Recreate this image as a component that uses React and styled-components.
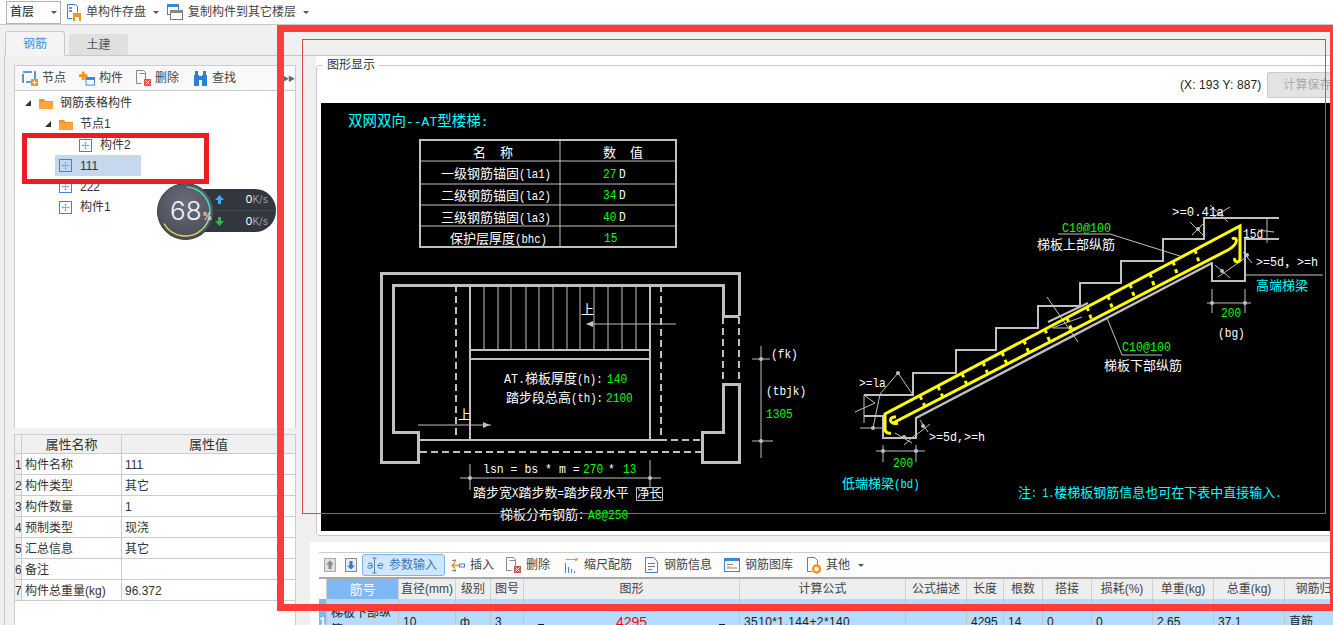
import React from 'react';
import styled, { createGlobalStyle } from 'styled-components';

const UI_FONT = '"Liberation Sans", "Noto Sans CJK SC", sans-serif';
const CAD_FONT = '"Liberation Mono", "Noto Sans CJK SC", monospace';

const GlobalStyle = createGlobalStyle`
  html, body { margin: 0; padding: 0; background: #fff; }
  * { box-sizing: border-box; }
`;

const Page = styled.div`
  position: relative;
  width: 1333px;
  height: 625px;
  overflow: hidden;
  display: flex;
  flex-direction: column;
  background: #f0f0f0;
  font: 12px/1 ${UI_FONT};
  color: #333;
`;

/* ---------- top bar ---------- */
const TopBar = styled.div`
  height: 25px;
  flex: none;
  display: flex;
  align-items: center;
  padding-left: 6px;
  background: #fff;
  border-bottom: 1px solid #c8c8c8;
`;
const FloorSelect = styled.div`
  width: 55px;
  height: 23px;
  display: flex;
  align-items: center;
  justify-content: space-between;
  padding: 0 3px 0 3px;
  margin-right: 6px;
  border: 1px solid #b4b4b4;
  color: #222;
`;
const TopBtn = styled.div`
  display: flex;
  align-items: center;
  margin-right: ${({ $gap }) => $gap}px;
  color: #444;
  white-space: nowrap;
  svg { margin-right: ${({ $iconGap }) => $iconGap}px; flex: none; }
`;
const Caret = styled.span`
  display: inline-block;
  margin-left: ${({ $left }) => $left || 0}px;
  border-left: 3px solid transparent;
  border-right: 3px solid transparent;
  border-top: 3px solid #555;
`;

const Main = styled.div`
  flex: 1;
  display: flex;
  min-height: 0;
`;

/* ---------- left column ---------- */
const LeftCol = styled.div`
  width: 302px;
  flex: none;
  display: flex;
  flex-direction: column;
  padding-left: 4px;
`;
const Tabs = styled.div`
  height: 31px;
  flex: none;
  display: flex;
  align-items: flex-end;
  padding-left: 1px;
  border-bottom: 1px solid #c8c8c8;
`;
const Tab = styled.div`
  width: ${({ $active }) => ($active ? 60 : 59)}px;
  height: ${({ $active }) => ($active ? 25 : 22)}px;
  margin-right: 4px;
  margin-bottom: -1px;
  display: flex;
  align-items: center;
  justify-content: center;
  border-radius: 3px 3px 0 0;
  font-size: 12px;
  color: ${({ $active }) => ($active ? '#3b8fe0' : '#555')};
  background: ${({ $active }) => ($active ? '#f4f4f4' : '#e0e0e0')};
  border: 1px solid ${({ $active }) => ($active ? '#c8c8c8' : '#e0e0e0')};
  border-bottom: ${({ $active }) => ($active ? '1px solid #f4f4f4' : '1px solid #c8c8c8')};
`;
const LeftBody = styled.div`
  flex: 1;
  min-height: 0;
  border-left: 1px solid #c8c8c8;
  padding: 9px 0 0 9px;
  display: flex;
  flex-direction: column;
`;
const PanelBox = styled.div`
  width: 282px;
  flex: none;
  display: flex;
  flex-direction: column;
  border: 1px solid #c8ccd4;
  border-bottom: 0;
  background: #fff;
`;
const TreeTools = styled.div`
  height: 25px;
  display: flex;
  align-items: center;
  padding-left: 7px;
  border-bottom: 1px solid #c8ccd4;
  background: #f9f9f9;
  position: relative;
`;
const ToolItem = styled.div`
  display: flex;
  align-items: center;
  margin-right: ${({ $gap }) => $gap}px;
  color: #444;
  svg { margin-right: 4px; flex: none; }
`;
const Collapse = styled.span`
  margin-left: auto;
  margin-right: 1px;
  font-size: 7px;
  letter-spacing: -1px;
  color: #666;
`;
const Tree = styled.div`
  height: 337px;
  padding-top: 2px;
  background: #fff;
`;
const TreeRow = styled.div`
  height: 20.8px;
  display: flex;
  align-items: center;
  padding-left: ${({ $indent }) => $indent}px;
  color: #333;
`;
const RowInner = styled.div`
  display: flex;
  align-items: center;
  height: 21px;
  width: ${({ $selected }) => ($selected ? '86px' : 'auto')};
  padding-left: 4px;
  background: ${({ $selected }) => ($selected ? '#c7d7ee' : 'transparent')};
  svg { margin-right: ${({ $folder }) => ($folder ? 7 : 8)}px; flex: none; }
`;
const Twist = styled.span`
  width: 0;
  height: 0;
  margin-right: 4px;
  border-style: solid;
  border-width: 0 0 6px 6px;
  border-color: transparent transparent #333 transparent;
`;
const PropGrid = styled.div`
  margin-top: 6px;
  width: 282px;
  flex: 1;
  background: #fff;
  border-left: 1px solid #c8ccd4;
  border-right: 1px solid #c8ccd4;
`;
const PropRow = styled.div`
  display: grid;
  grid-template-columns: 7px 100px 1fr;
  height: ${({ $head }) => ($head ? 20 : 21)}px;
  border-top: ${({ $head }) => ($head ? '1px solid #c8ccd4' : 0)};
  border-bottom: 1px solid #c8ccd4;
`;
const PropCell = styled.div`
  display: flex;
  align-items: center;
  justify-content: ${({ $head }) => ($head ? 'center' : 'flex-start')};
  padding-left: ${({ $head, $num }) => ($head || $num ? 0 : 3)}px;
  padding-top: ${({ $head }) => ($head ? 0 : 2)}px;
  border-right: ${({ $last }) => ($last ? 0 : '1px solid #c8ccd4')};
  background: ${({ $head, $num }) => ($head || $num ? '#f0f0f0' : '#fff')};
  font-size: ${({ $head }) => ($head ? 13 : 12)}px;
  color: #333;
  overflow: hidden;
`;

/* ---------- right column ---------- */
const RightCol = styled.div`
  width: 1031px;
  flex: none;
  display: flex;
  flex-direction: column;
  overflow: hidden;
`;
const RightTop = styled.div`
  height: 31px;
  flex: none;
  border-bottom: 1px solid #c8c8c8;
`;
const GroupWrap = styled.div`
  margin-left: 14px;
  padding-top: 9px;
  background: #fff;
  flex: none;
  width: 1040px;
`;
const GroupBox = styled.div`
  position: relative;
  width: 1040px;
  height: 471px;
  padding: 0 4px;
  background: #fff;
  border: 1px solid #c8c8c8;
  border-radius: 3px;
`;
const GroupLabel = styled.span`
  position: absolute;
  left: 6px;
  top: -7px;
  padding: 0 4px;
  background: #fff;
  color: #333;
`;
const InfoRow = styled.div`
  height: 37px;
  display: flex;
  align-items: center;
  padding-left: 859px;
  color: #222;
  letter-spacing: 0.1px;
`;
const SaveBtn = styled.div`
  width: 70px;
  height: 26px;
  margin-left: 6px;
  display: flex;
  align-items: center;
  padding-left: 15px;
  background: #e3e3e3;
  border: 1px solid #c5cad3;
  border-radius: 2px;
  color: #aaa;
`;
const Canvas = styled.svg`
  display: block;
  width: 1030px;
  height: 428px;
  background: #000;
`;

const LowerPanel = styled.div`
  margin: 6px 0 0 8px;
  flex: 1;
  min-height: 0;
  padding: 10px 0 0 9px;
  background: #fff;
  width: 1050px;
`;
const LowerTools = styled.div`
  height: 25px;
  display: flex;
  align-items: center;
  padding-left: 5px;
  border-top: 1px solid #ccc;
  background: #fdfdfd;
`;
const SmallSquare = styled.div`
  width: 12px;
  height: 14px;
  margin-right: 9px;
  display: flex;
  svg { display: block; }
`;
const GridTool = styled.div`
  display: flex;
  align-items: center;
  height: 22px;
  padding: ${({ $active }) => ($active ? '0 7px 0 4px' : '0')};
  margin-left: ${({ $left }) => $left}px;
  color: ${({ $active }) => ($active ? '#3a78b8' : '#444')};
  background: ${({ $active }) => ($active ? '#cfe6fb' : 'transparent')};
  border: ${({ $active }) => ($active ? '1px solid #7eb4ea' : 0)};
  border-radius: 3px;
  white-space: nowrap;
  svg { margin-right: ${({ $iconGap }) => $iconGap || 5}px; flex: none; }
`;
const COLS = '8px 72px 57px 35px 33px 216px 166px 61px 37px 39px 49px 61px 61px 71px 70px';
const GridHead = styled.div`
  display: grid;
  grid-template-columns: ${COLS};
  height: 22px;
  border-top: 2px solid #a8a8a8;
`;
const HeadCell = styled.div`
  display: flex;
  align-items: center;
  justify-content: center;
  white-space: nowrap;
  overflow: hidden;
  font-size: ${({ $big }) => ($big ? 13 : 12)}px;
  color: ${({ $sel }) => ($sel ? '#fff' : '#444')};
  background: ${({ $sel, $corner }) => ($sel ? '#7eb8f5' : $corner ? '#fff' : '#eee')};
  border-right: 1px solid #d0d0d0;
`;
const GridData = styled.div`
  display: grid;
  grid-template-columns: ${COLS};
  height: 46px;
`;
const DataCell = styled.div`
  position: relative;
  display: flex;
  align-items: center;
  justify-content: ${({ $center }) => ($center ? 'center' : 'flex-start')};
  padding-left: ${({ $center, $num }) => ($center || $num ? 0 : 4)}px;
  background: ${({ $num }) => ($num ? '#7eb8f5' : '#b5dbff')};
  border-right: 1px solid #c4c4c4;
  color: ${({ $red, $num }) => ($red ? '#f00' : $num ? '#fff' : '#222')};
  font-size: ${({ $red }) => ($red ? 14 : 12)}px;
  font-weight: ${({ $num }) => ($num ? 700 : 400)};
  line-height: 17px;
  letter-spacing: ${({ $mono }) => ($mono ? '0.4px' : 0)};
  white-space: ${({ $wrap }) => ($wrap ? 'normal' : 'nowrap')};
  overflow: hidden;
`;
const ShapeTick = styled.span`
  position: absolute;
  top: 25px;
  ${({ $side }) => $side}: 14px;
  width: 6px;
  height: 1px;
  background: #222;
`;

/* ---------- overlays ---------- */
const Frame = styled.div`
  position: absolute;
  left: ${({ $x }) => $x}px;
  top: ${({ $y }) => $y}px;
  width: ${({ $w }) => $w}px;
  height: ${({ $h }) => $h}px;
  border: ${({ $t }) => $t}px solid ${({ $c }) => $c};
  pointer-events: none;
`;
const Widget = styled.div`
  position: absolute;
  left: 157px;
  top: 183px;
  width: 119px;
  height: 57px;
`;
const Pill = styled.div`
  position: absolute;
  left: 30px;
  top: 6px;
  width: 89px;
  height: 43px;
  padding-left: 28px;
  border-radius: 0 21px 21px 0;
  background: #32363f;
  display: flex;
  flex-direction: column;
`;
const SpeedRow = styled.div`
  flex: 1;
  display: flex;
  align-items: center;
  justify-content: space-between;
  padding-right: 8px;
  font: 10px/1 "Inter", "Liberation Sans", sans-serif;
  color: #9a9ea8;
  border-top: ${({ $split }) => ($split ? '1px solid #454953' : 0)};
  b { font-weight: 400; color: #fff; font-size: 11px; }
`;
const Dial = styled.svg`
  position: absolute;
  left: 0;
  top: 0;
`;
const DialText = styled.div`
  position: absolute;
  left: 13px;
  top: 15px;
  color: #f4f4f6;
  font: 300 26px/1 "Inter", "Open Sans", sans-serif;
  span { font-size: 10px; font-weight: 400; margin-left: 1px; }
`;

/* ---------- CAD drawing parts ---------- */
const Wall = styled.path`
  fill: none;
  stroke: #c0c0c0;
  stroke-width: ${({ $w }) => $w || 3}px;
  stroke-dasharray: ${({ $dash }) => $dash || 'none'};
  shape-rendering: crispEdges;
`;
const Thin = styled.path`
  fill: none;
  stroke: #c0c0c0;
  stroke-width: 1px;
`;
const Rebar = styled.path`
  fill: none;
  stroke: #ffff00;
  stroke-width: 3px;
  stroke-dasharray: ${({ $dash }) => $dash || 'none'};
`;
const Dot = styled.circle`
  fill: #c0c0c0;
`;
const Label = styled.text`
  font-family: ${CAD_FONT};
  font-size: ${({ $s }) => $s || 13}px;
  fill: ${({ $c }) => $c || '#fff'};
  white-space: pre;
`;
const LatinSpan = styled.tspan`
  font-size: 13px;
`;

// the CAD font has narrow, tall latin letters: squeeze them to a fixed advance
const Latin = ({ w = 6.4, children }) => (
  <LatinSpan textLength={children.length * w} lengthAdjust="spacingAndGlyphs">
    {children}
  </LatinSpan>
);
const Mono = ({ x, y, c, w = 6.7, children }) => (
  <Label
    x={x}
    y={y}
    $c={c}
    textLength={children.length * w}
    lengthAdjust="spacingAndGlyphs"
  >
    {children}
  </Label>
);

const GREEN = '#00ff00';
const CYAN = '#00ffff';

/* ---------- small icons ---------- */
const FolderIcon = () => (
  <svg width="14" height="13" viewBox="0 0 14 13">
    <path d="M0 2h5l1.5 2H14v8H0z" fill="#f7941d" />
    <path d="M0 5h14v7H0z" fill="#fba63c" />
  </svg>
);
const ElementIcon = () => (
  <svg width="13" height="13" viewBox="0 0 13 13" fill="none" stroke="#3d86d6">
    <rect x=".5" y=".5" width="12" height="12" />
    <path d="M6.500 3v7M3 6.500h7M5.500 4l1-1 1 1M5.500 9l1 1 1-1M4 5.500l-1 1 1 1M9 5.500l1 1-1 1" stroke="#7fb2e8" />
  </svg>
);
const SaveIcon = () => (
  <svg width="14" height="17" viewBox="0 0 14 17" fill="none">
    <path d="M.5.5h8l2 2v6M.5.5v14h5" stroke="#3d86d6" />
    <rect x="2" y="3" width="3" height="2" fill="#5a9ad9" />
    <rect x="2" y="6" width="3" height="2" fill="#5a9ad9" />
    <rect x="6" y="9" width="8" height="8" fill="#f7941d" />
    <rect x="8" y="13" width="4" height="4" fill="#fff" />
  </svg>
);
const CopyIcon = () => (
  <svg width="16" height="16" viewBox="0 0 16 16" fill="none">
    <rect x=".5" y=".5" width="11" height="10" fill="#fff" stroke="#3d86d6" />
    <rect x="0" y="0" width="12" height="3" fill="#3d86d6" />
    <rect x="3.500" y="6.500" width="12" height="9" fill="#fff" stroke="#777" />
    <rect x="3" y="6" width="13" height="3" fill="#888" />
  </svg>
);
const NodeIcon = () => (
  <svg width="16" height="15" viewBox="0 0 16 15" fill="none">
    <rect x="1" y="1" width="12" height="10" stroke="#2f7fd0" strokeWidth="1.600" strokeDasharray="9 2" />
    <rect x="9" y="8" width="7" height="7" fill="#f7941d" />
    <path d="M12.500 9.500v4M10.500 11.500h4" stroke="#fff" />
  </svg>
);
const PartIcon = () => (
  <svg width="16" height="15" viewBox="0 0 17 15" fill="none">
    <path d="M3 0h3v3h3v3H6v3H3V6H0V3h3z" fill="#f7941d" />
    <rect x="7.500" y="6.500" width="9" height="8" fill="#fff" stroke="#3d86d6" />
    <rect x="7" y="6" width="10" height="3" fill="#3d86d6" />
  </svg>
);
const DeleteIcon = () => (
  <svg width="15" height="16" viewBox="0 0 15 16" fill="none">
    <path d="M.5.5h7l2 2v9M.5.5v13h5M3.500 3.500h6" stroke="#888" />
    <rect x="8" y="9" width="7" height="7" fill="#d9534f" />
    <path d="M9.500 10.500l4 4M13.500 10.500l-4 4" stroke="#fff" />
  </svg>
);
const FindIcon = () => (
  <svg width="15" height="15" viewBox="0 0 15 15">
    <rect x="1" y="4" width="5" height="11" fill="#2f7fd0" />
    <rect x="9" y="4" width="5" height="11" fill="#2f7fd0" />
    <rect x="2" y="0" width="3" height="4" fill="#2f7fd0" />
    <rect x="10" y="0" width="3" height="4" fill="#2f7fd0" />
    <rect x="6" y="5" width="3" height="4" fill="#2f7fd0" />
  </svg>
);
const UpIcon = () => (
  <svg width="12" height="14" viewBox="0 0 12 14">
    <rect x=".5" y=".5" width="11" height="13" fill="#e0e0e0" stroke="#aaa" />
    <path d="M6 2.500l4 4H7.500V11h-3V6.500H2z" fill="#8a8a8a" />
  </svg>
);
const DownIcon = () => (
  <svg width="12" height="14" viewBox="0 0 12 14">
    <rect x=".5" y=".5" width="11" height="13" fill="#e8eef5" stroke="#888" />
    <path d="M6 11.500l4-4H7.500V3h-3v4.500H2z" fill="#2f7fd0" />
  </svg>
);
const AjeIcon = () => (
  <svg width="20" height="17" viewBox="0 0 20 17" fill="none" stroke="#5a7fa8">
    <path d="M7.500 1v15M5.500 1h4M5.500 16h4" />
    <path d="M1 7c1-1.500 4-1.500 4 .5V11M5 8.500C2 8 .5 9 1 10.500s3.500 1 4-.5M11 8.500h5c0-3-5-3-5 0s3 3.500 5 2" stroke="#3a78b8" />
  </svg>
);
const InsertIcon = () => (
  <svg width="14" height="15" viewBox="0 0 14 15" fill="none">
    <path d="M1 2.500h4M1 12.500h4M4 1v3M4 11v3" stroke="#888" />
    <path d="M8 7.500H1M4 4.500l-3 3 3 3" stroke="#f7941d" strokeWidth="1.500" />
    <rect x="8.500" y="6" width="5" height="3" fill="none" stroke="#3d86d6" />
  </svg>
);
const ScaleIcon = () => (
  <svg width="14" height="15" viewBox="0 0 14 15" fill="none">
    <path d="M.5 5v10M3.500 9v6M6.500 11v4M9.500 13v2" stroke="#3d86d6" />
    <path d="M1 1.500h11M10 0l3 1.500-3 1.500" stroke="#f7941d" />
  </svg>
);
const InfoIcon = () => (
  <svg width="13" height="16" viewBox="0 0 13 16" fill="none" stroke="#3d86d6">
    <path d="M.5.5h8l4 4v11H.5z" />
    <path d="M3 6.500h7M3 9.500h7M3 12.500h4" stroke="#777" />
  </svg>
);
const LibIcon = () => (
  <svg width="16" height="14" viewBox="0 0 16 14" fill="none">
    <rect x=".5" y=".5" width="15" height="13" stroke="#3d86d6" />
    <rect x="0" y="0" width="16" height="3" fill="#3d86d6" />
    <path d="M3 6.500h6M3 10h10" stroke="#888" />
    <path d="M3 9h3" stroke="#f7941d" />
  </svg>
);
const OtherIcon = () => (
  <svg width="14" height="17" viewBox="0 0 14 17" fill="none">
    <path d="M.5.5h7l3 3v5M.5.5v14h4" stroke="#3d86d6" />
    <circle cx="9.500" cy="12" r="3.500" fill="#fff" stroke="#f7941d" strokeWidth="2.500" />
  </svg>
);

/* ---------- the stair drawing, in page pixels ---------- */
const treadXs = [484, 498, 511, 526, 539, 553, 567, 580, 594, 608, 622, 636];
const tieXs = [920, 938, 962, 983, 1002, 1024, 1045, 1067, 1087, 1108, 1130, 1150, 1173, 1195];
const upperY = (x) => 414 - (x - 886) * 0.531;
const lowerY = (x) => 423 - (x - 893) * 0.514;
const dots = [
  [761, 359], [761, 441], [470, 478], [650, 478], [898, 373], [873, 428], [883, 451], [916, 451],
  [1212, 303], [1245, 303], [1198, 229], [1222, 271], [1247, 255], [923, 426], [904, 437],
];

const StairDrawing = () => (
  <Canvas viewBox="321 103 1030 428">
    <Label x="348" y="126" $s="14.500" $c={CYAN}>双网双向<Latin w={7.8}>--AT</Latin>型楼梯<Latin w={7.8}>:</Latin></Label>

    {/* anchor table */}
    <Wall $w="2" d="M420 140H676V247H420Z" />
    <Thin d="M560 140V247M420 161H676M420 184H676M420 205H676M420 226H676" />
    <Label x="473" y="157">名</Label>
    <Label x="500" y="157">称</Label>
    <Label x="603" y="157">数</Label>
    <Label x="630" y="157">值</Label>
    <Label x="441" y="178">一级钢筋锚固<Latin>(la1)</Latin></Label>
    <Label x="441" y="200">二级钢筋锚固<Latin>(la2)</Latin></Label>
    <Label x="441" y="222">三级钢筋锚固<Latin>(la3)</Latin></Label>
    <Label x="450" y="243">保护层厚度<Latin>(bhc)</Latin></Label>
    <Mono x="603" y="178" c={GREEN}>27</Mono>
    <Mono x="619" y="178">D</Mono>
    <Mono x="603" y="199" c={GREEN}>34</Mono>
    <Mono x="619" y="199">D</Mono>
    <Mono x="603" y="221" c={GREEN}>40</Mono>
    <Mono x="619" y="221">D</Mono>
    <Mono x="604" y="242" c={GREEN}>15</Mono>

    {/* plan view */}
    <Wall d="M739 316V273H381V462H418V432H393V285H723V316H739M739 384V462H702V432H723V384Z" />
    <Wall $w="2" $dash="7 4" d="M723 317V384M739 317V384" />
    <Wall $w="2" $dash="7 4" d="M456 285V440M661 285V440M660 440H702M420 452H702" />
    <Wall $w="2" d="M470 285V440M650 285V440M470 350H650M470 359H650M418 440H660" />
    <Thin d={treadXs.map((x) => `M${x} 285V350`).join('')} />
    <Thin d="M587 324H676M418 425H491M761 346V458M752 359H770M752 441H773M460 478H661M470 464V490M650 460V487" />
    <path d="M586 324l7-3v6zM490 425l-7-3v6z" fill="#c0c0c0" />
    <Label x="581" y="314">上</Label>
    <Label x="458" y="419">上</Label>
    <Label x="504" y="383"><Latin w={7}>AT.</Latin>梯板厚度<Latin>(h):</Latin></Label>
    <Mono x="607" y="383" c={GREEN}>140</Mono>
    <Label x="506" y="402">踏步段总高<Latin>(th):</Latin></Label>
    <Mono x="606" y="402" c={GREEN}>2100</Mono>
    <Mono x="771" y="358">(fk)</Mono>
    <Mono x="766" y="395">(tbjk)</Mono>
    <Mono x="766" y="418" c={GREEN}>1305</Mono>
    <Mono x="483" y="473" w={6.9}>lsn = bs * m =</Mono>
    <Mono x="583" y="473" c={GREEN}>270</Mono>
    <Mono x="608" y="473">*</Mono>
    <Mono x="623" y="473" c={GREEN}>13</Mono>
    <Label x="473" y="497">踏步宽<Latin>X</Latin>踏步数<Latin>=</Latin>踏步段水平</Label>
    <Label x="637" y="498" $s="12.500">净长</Label>
    <Thin d="M636.500 487.500H662.500V500.500H636.500Z" />
    <Label x="500" y="519">梯板分布钢筋<Latin>:</Latin></Label>
    <Mono x="588" y="519" c={GREEN}>A8@250</Mono>

    {/* section view */}
    <Wall $w="2" d="M864 395H913V373H956V350H996V328H1038V306H1080V283H1121V261H1163V239H1204V218H1279M864 416H883V438H916V417M1212 262V281H1245V239H1279" />
    <path d="M916 418L1212 263" fill="none" stroke="#c0c0c0" strokeWidth="2.500" />
    <Thin d="M1245 275H1323M864 395V423M855 412L875 403L864 395M1058 234H1110L1183 257M1107 318L1122 355H1162" />
    <Thin d="M873 428L880 394L898 373L913 395M860 428H883M876 451H925M883 445V462M916 445V462M1207 303H1251M1212 289V313M1245 289V313" />
    <Thin d="M1267 217V243M1258 230L1274 232M1210 205L1228 222M1212 218L1230 207M1192 235L1204 223M1190 222L1203 235M1243 252L1252 263M1215 265L1230 278M1218 277L1245 258M1047 297L1078 342M1052 328L1082 317M1053 328H1077" />
    <Thin d="M895 433L912 443M904 445L915 435M920 420L928 432M915 436L930 424" />
    <path d="M1048 322L1088 303" fill="none" stroke="#c0c0c0" strokeWidth="2" />
    {dots.map(([x, y]) => <Dot key={`${x}-${y}`} cx={x} cy={y} r="2" />)}

    <Rebar d="M891 433C886 434 885 431 885 428V414L1240 226V259C1240 263 1233 263 1235 258" />
    <Rebar d="M898 423C889 426 888 416 896 417M893 423L1228 250C1240 243 1237 236 1232 239" />
    <Rebar
      $dash="4 4 4"
      d={tieXs.map((x) => `M${x} ${upperY(x).toFixed(1)}L${x + 5} ${lowerY(x + 5).toFixed(1)}`).join('')}
    />

    <Mono x="1062" y="232" c={GREEN} w={7}>C10@100</Mono>
    <Label x="1037" y="249">梯板上部纵筋</Label>
    <Mono x="1122" y="351" c={GREEN} w={7}>C10@100</Mono>
    <Label x="1104" y="370">梯板下部纵筋</Label>
    <Mono x="1172" y="216" w={7.4}>{'>=0.41a'}</Mono>
    <Mono x="1243" y="238">15d</Mono>
    <Label x="1256" y="266"><Latin w={7}>{'>=5d'}</Latin>，<Latin w={7}>{'>=h'}</Latin></Label>
    <Label x="1256" y="290" $c={CYAN}>高端梯梁</Label>
    <Mono x="1221" y="317" c={GREEN}>200</Mono>
    <Mono x="1218" y="337">(bg)</Mono>
    <Mono x="859" y="387">{'>=la'}</Mono>
    <Mono x="929" y="441" w={7}>{'>=5d,>=h'}</Mono>
    <Mono x="893" y="467" c={GREEN}>200</Mono>
    <Label x="842" y="488" $c={CYAN}>低端梯梁<Latin>(bd)</Latin></Label>
    <Label x="1018" y="497" $c={CYAN}>注<Latin w={5.8}>: 1.</Latin>楼梯板钢筋信息也可在下表中直接输入<Latin>.</Latin></Label>
  </Canvas>
);

const props = [
  ['1', '构件名称', '111'],
  ['2', '构件类型', '其它'],
  ['3', '构件数量', '1'],
  ['4', '预制类型', '现浇'],
  ['5', '汇总信息', '其它'],
  ['6', '备注', ''],
  ['7', '构件总重量(kg)', '96.372'],
];

const heads = ['直径(mm)', '级别', '图号', '图形', '计算公式', '公式描述', '长度', '根数', '搭接', '损耗(%)', '单重(kg)', '总重(kg)', '钢筋归类'];

const App = () => (
  <Page>
    <GlobalStyle />
    <TopBar>
      <FloorSelect>首层<Caret /></FloorSelect>
      <TopBtn $gap={8} $iconGap={5}><SaveIcon />单构件存盘<Caret $left={7} /></TopBtn>
      <TopBtn $gap={0} $iconGap={5}><CopyIcon />复制构件到其它楼层<Caret $left={7} /></TopBtn>
    </TopBar>
    <Main>
      <LeftCol>
        <Tabs>
          <Tab $active>钢筋</Tab>
          <Tab>土建</Tab>
        </Tabs>
        <LeftBody>
          <PanelBox>
            <TreeTools>
              <ToolItem $gap={13}><NodeIcon />节点</ToolItem>
              <ToolItem $gap={13}><PartIcon />构件</ToolItem>
              <ToolItem $gap={14}><DeleteIcon />删除</ToolItem>
              <ToolItem $gap={0}><FindIcon />查找</ToolItem>
              <Collapse>▶▶</Collapse>
            </TreeTools>
            <Tree>
              <TreeRow $indent={10}><Twist /><RowInner $folder><FolderIcon />钢筋表格构件</RowInner></TreeRow>
              <TreeRow $indent={30}><Twist /><RowInner $folder><FolderIcon />节点1</RowInner></TreeRow>
              <TreeRow $indent={60}><RowInner><ElementIcon />构件2</RowInner></TreeRow>
              <TreeRow $indent={40}><RowInner $selected><ElementIcon />111</RowInner></TreeRow>
              <TreeRow $indent={40}><RowInner><ElementIcon />222</RowInner></TreeRow>
              <TreeRow $indent={40}><RowInner><ElementIcon />构件1</RowInner></TreeRow>
            </Tree>
          </PanelBox>
          <PropGrid>
            <PropRow $head>
              <PropCell $num />
              <PropCell $head>属性名称</PropCell>
              <PropCell $head $last>属性值</PropCell>
            </PropRow>
            {props.map(([n, name, value]) => (
              <PropRow key={n}>
                <PropCell $num>{n}</PropCell>
                <PropCell>{name}</PropCell>
                <PropCell $last>{value}</PropCell>
              </PropRow>
            ))}
          </PropGrid>
        </LeftBody>
      </LeftCol>
      <RightCol>
        <RightTop />
        <GroupWrap>
          <GroupBox>
            <GroupLabel>图形显示</GroupLabel>
            <InfoRow>
              (X: 193 Y: 887)
              <SaveBtn>计算保存</SaveBtn>
            </InfoRow>
            <StairDrawing />
          </GroupBox>
        </GroupWrap>
        <LowerPanel>
          <LowerTools>
            <SmallSquare><UpIcon /></SmallSquare>
            <SmallSquare><DownIcon /></SmallSquare>
            <GridTool $active $left={-4} $iconGap={2}><AjeIcon />参数输入</GridTool>
            <GridTool $left={6}><InsertIcon />插入</GridTool>
            <GridTool $left={12}><DeleteIcon />删除</GridTool>
            <GridTool $left={15}><ScaleIcon />缩尺配筋</GridTool>
            <GridTool $left={13} $iconGap={6}><InfoIcon />钢筋信息</GridTool>
            <GridTool $left={12}><LibIcon />钢筋图库</GridTool>
            <GridTool $left={14}><OtherIcon />其他<Caret $left={8} /></GridTool>
          </LowerTools>
          <GridHead>
            <HeadCell $corner />
            <HeadCell $sel $big>筋号</HeadCell>
            {heads.map((h) => <HeadCell key={h}>{h}</HeadCell>)}
          </GridHead>
          <GridData>
            <DataCell $num $center>1</DataCell>
            <DataCell $wrap>梯板下部纵筋</DataCell>
            <DataCell>10</DataCell>
            <DataCell>ф</DataCell>
            <DataCell>3</DataCell>
            <DataCell $center $red>
              <ShapeTick $side="left" />
              4295
              <ShapeTick $side="right" />
            </DataCell>
            <DataCell $mono>3510*1.144+2*140</DataCell>
            <DataCell />
            <DataCell>4295</DataCell>
            <DataCell>14</DataCell>
            <DataCell>0</DataCell>
            <DataCell>0</DataCell>
            <DataCell>2.65</DataCell>
            <DataCell>37.1</DataCell>
            <DataCell>直筋</DataCell>
          </GridData>
        </LowerPanel>
      </RightCol>
    </Main>

    <Widget>
      <Pill>
        <SpeedRow>
          <svg width="9" height="9" viewBox="0 0 9 9"><path d="M4.500 0L9 5H6v4H3V5H0z" fill="#3fa9f5" /></svg>
          <span><b>0</b>K/s</span>
        </SpeedRow>
        <SpeedRow $split>
          <svg width="9" height="9" viewBox="0 0 9 9"><path d="M4.500 9L9 4H6V0H3v4H0z" fill="#35b54a" /></svg>
          <span><b>0</b>K/s</span>
        </SpeedRow>
      </Pill>
      <Dial width="57" height="57" viewBox="0 0 57 57">
        <defs>
          <radialGradient id="dialFill" cx="50%" cy="35%" r="70%">
            <stop offset="0%" stopColor="#6a6e7a" />
            <stop offset="100%" stopColor="#474a55" />
          </radialGradient>
        </defs>
        <circle cx="28.500" cy="28.500" r="28" fill="url(#dialFill)" stroke="#363a44" />
        <path d="M30 4A24.500 24.500 0 0 1 52.500 33" fill="none" stroke="#4fd8b0" strokeWidth="1.500" />
        <path d="M52.500 33A24.500 24.500 0 0 1 45 46.500" fill="none" stroke="#8edc8a" strokeWidth="1.500" />
        <path d="M45 46.500A24.500 24.500 0 0 1 7 40.500" fill="none" stroke="#e6d94a" strokeWidth="1.500" />
      </Dial>
      <DialText>68<span>%</span></DialText>
    </Widget>

    <Frame $x={22} $y={133} $w={187} $h={51} $t={5} $c="#ed1c24" />
    <Frame $x={277} $y={25} $w={1060} $h={586} $t={7} $c="#ff3b3b" />
    <Frame $x={302} $y={39} $w={1024} $h={475} $t={1} $c="#e04848" />
  </Page>
);

export default App;
